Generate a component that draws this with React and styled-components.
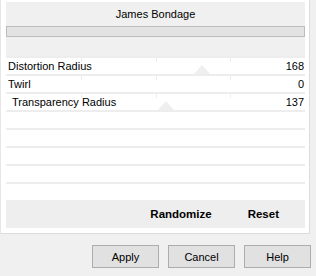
import React from 'react';
import styled, { createGlobalStyle } from 'styled-components';

const GlobalStyle = createGlobalStyle`
  html, body {
    margin: 0;
    padding: 0;
    background: #f0f0f0;
  }
  body {
    width: 316px;
    height: 276px;
    overflow: hidden;
    font-family: 'Liberation Sans', Arial, sans-serif;
    font-size: 11px;
    color: #000000;
  }
`;

const Window = styled.div`
  display: flex;
  flex-direction: column;
  width: 316px;
  height: 276px;
`;

const Panel = styled.div`
  width: 299px;
  padding: 2px 4px 5px 5px;
  background: #ffffff;
  border-left: 1px solid #e6e6e6;
  border-right: 1px solid #dcdcdc;
  border-bottom: 1px solid #dcdcdc;
  display: flex;
  flex-direction: column;
`;

const Header = styled.div`
  height: 54px;
  background: #f0f0f0;
  display: flex;
  flex-direction: column;
  align-items: center;
`;

const Title = styled.div`
  height: 24px;
  line-height: 24px;
  font-size: 11px;
`;

const Bar = styled.div`
  align-self: stretch;
  height: 9px;
  background: #e3e3e3;
  border: 1px solid #bcbcbc;
`;

const Row = styled.div`
  position: relative;
  height: 16px;
  border-top: 2px solid #ededed;
  display: flex;
  align-items: center;
  justify-content: space-between;
  padding: 0 1px 0 ${(p) => (p.$indent ? 6 : 2)}px;
`;

const Tick = styled.span`
  position: absolute;
  top: 0;
  width: 1px;
  height: 4px;
  background: #ededed;
`;

const Thumb = styled.span`
  position: absolute;
  bottom: 0;
  width: 0;
  height: 0;
  margin-left: -8px;
  border-left: 8px solid transparent;
  border-right: 8px solid transparent;
  border-bottom: 9px solid #efefef;
`;

const Label = styled.span`
  position: relative;
  line-height: 16px;
`;

const Value = styled.span`
  position: relative;
  line-height: 16px;
`;

const Footer = styled.div`
  height: 28px;
  background: #eeeeee;
  display: flex;
  align-items: center;
  justify-content: flex-end;
  gap: 36px;
  padding-right: 26px;
`;

const Action = styled.span`
  font-weight: bold;
  font-size: 11.5px;
`;

const Buttons = styled.div`
  display: flex;
  justify-content: flex-end;
  gap: 9px;
  margin-top: 11px;
  padding-right: 5px;
`;

const Button = styled.button`
  width: 67px;
  height: 23px;
  padding: 0;
  background: #e1e1e1;
  border: 1px solid #adadad;
  border-radius: 0;
  font-family: 'Liberation Sans', Arial, sans-serif;
  font-size: 11px;
  color: #000000;
`;

const sliders = [
  { label: 'Distortion Radius', value: 168 },
  { label: 'Twirl', value: 0 },
  { label: 'Transparency Radius', value: 137, indent: true },
];

const MAX = 256;

const App = () => {
  const rows = [...sliders, null, null, null, null, null];

  return (
    <>
      <GlobalStyle />
      <Window>
        <Panel>
          <Header>
            <Title>James Bondage</Title>
            <Bar />
          </Header>
          {rows.map((s, i) => (
            <Row key={i} $indent={s && s.indent}>
              {s && (
                <>
                  <Tick style={{ left: '25%' }} />
                  <Tick style={{ left: '50%' }} />
                  <Tick style={{ left: '75%' }} />
                  {s.value > 0 && <Thumb style={{ left: `${(s.value / MAX) * 100}%` }} />}
                  <Label>{s.label}</Label>
                  <Value>{s.value}</Value>
                </>
              )}
            </Row>
          ))}
          <Footer>
            <Action>Randomize</Action>
            <Action>Reset</Action>
          </Footer>
        </Panel>
        <Buttons>
          <Button>Apply</Button>
          <Button>Cancel</Button>
          <Button>Help</Button>
        </Buttons>
      </Window>
    </>
  );
};

export default App;
